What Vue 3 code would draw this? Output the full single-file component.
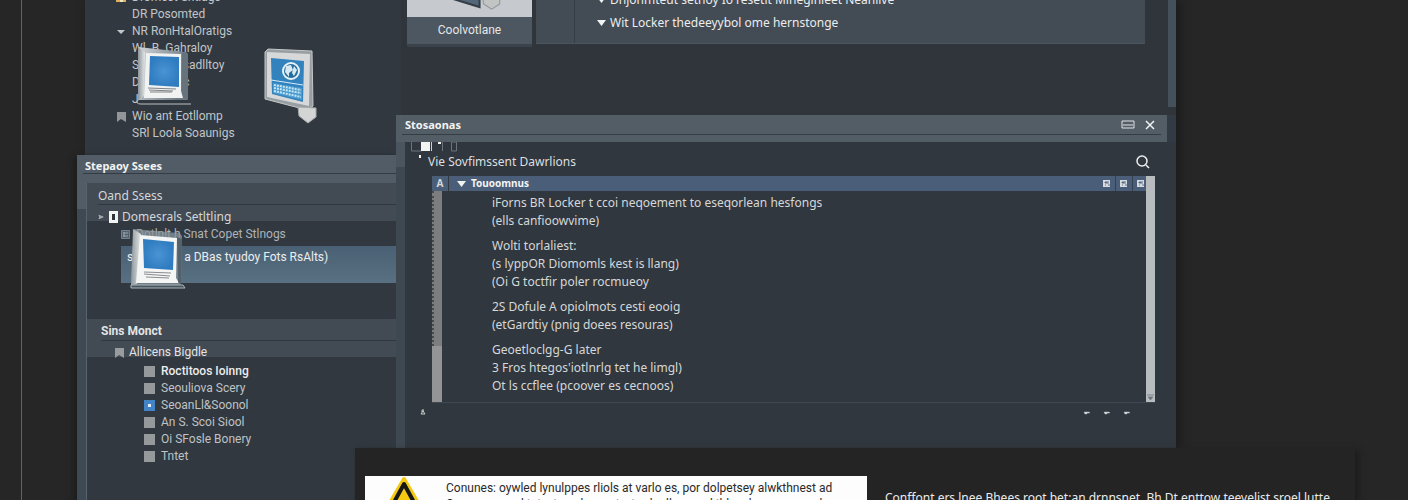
<template>
  <main class="desktop">
    <div class="guide"></div>

    <section class="window main-window">
      <nav class="sidebar">
        <ul>
          <li v-for="item in sideItems" :key="item.text">
            <span class="marker">
              <svg v-if="item.icon === 'folder'" viewBox="0 0 10 10"><path d="M0 0h10v9H0z" fill="#dfb15d" /><path d="M4 5h3v4H4z" fill="#f5e6b9" /></svg>
              <svg v-if="item.icon === 'open'" viewBox="0 0 10 10"><path d="M1 3h8L5 7z" fill="#c4c7c9" /></svg>
              <svg v-if="item.icon === 'flag'" viewBox="0 0 10 10"><path d="M1 0h9v10L5 7 1 10z" fill="#92969a" /></svg>
            </span>
            <a href="#">{{ item.text }}</a>
          </li>
        </ul>
      </nav>
      <div class="content">
        <button class="tile">
          <span class="tile-art">
            <svg viewBox="0 0 124 16">
              <path d="M36-4L72 7V-5z" fill="#526878" stroke="#343d45" stroke-width="2" />
              <path d="M75-3h17v7l-8 5-8-5z" fill="#c3c4c4" stroke="#919496" />
            </svg>
          </span>
          <span class="tile-label">Coolvotlane</span>
        </button>
        <div class="overview">
          <div class="gutter"></div>
          <ul>
            <li v-for="line in overview" :key="line">
              <svg viewBox="0 0 10 10"><path d="M0 2h9L4.500 8z" fill="#f1f2f2" /></svg>{{ line }}
            </li>
          </ul>
        </div>
      </div>
      <div class="edge"></div>
    </section>

    <section class="window tree-window">
      <h2>Stepaoy Ssees</h2>
      <div class="tree-body">
        <div class="group first">
          <h3>Oand Ssess</h3>
          <p class="node">
            <svg class="arrow" viewBox="0 0 8 8"><path d="M1 2l5 2-5 2 1-2z" fill="#a8adb1" stroke="#a8adb1" /></svg>
            <svg class="page" viewBox="0 0 9 12"><path d="M0 0h9v12H0z" fill="#f2f3f3" /><path d="M3 3h3v6H3z" fill="#30363d" /></svg>
            Domesrals Setltling
          </p>
        </div>
        <p class="subnode">
          <svg viewBox="0 0 9 9"><path d="M.5.5h8v8h-8z" fill="#51616e" stroke="#73818c" /><path d="M2 3h5M2 6h5M3 2v5" stroke="#9aa5ad" /></svg>
          <span>Dotlnlt h Snat Copet Stlnogs</span>
        </p>
        <button class="selected"><i>s</i><span>a DBas tyudoy Fots RsAlts)</span></button>

        <div class="group second">
          <h3>Sins Monct</h3>
          <p class="node">
            <svg class="flag" viewBox="0 0 10 10"><path d="M1 0h9v10L5 7 1 10z" fill="#999c9f" /></svg>
            Allicens Bigdle
          </p>
        </div>
        <ul class="checks">
          <li v-for="(item, i) in checks" :key="item.text">
            <label :class="{ strong: i === 0 }">
              <input v-model="item.on" type="checkbox" />{{ item.text }}
            </label>
          </li>
        </ul>
      </div>
    </section>

    <svg class="device upper" viewBox="0 0 56 62">
      <defs>
        <linearGradient id="frame" x1="0" x2="1" y2=".3">
          <stop stop-color="#d5d8d9" /><stop offset=".4" stop-color="#a9b0b5" /><stop offset="1" stop-color="#6d7982" />
        </linearGradient>
        <linearGradient id="side" x1="0" x2="1">
          <stop stop-color="#8d969c" /><stop offset="1" stop-color="#e4e6e6" />
        </linearGradient>
        <radialGradient id="screen"><stop stop-color="#4a94d4" /><stop offset="1" stop-color="#2f7cc0" /></radialGradient>
      </defs>
      <path d="M2 1l46 5q4 0 4 3l-1 45H2z" fill="url(#frame)" />
      <path d="M2 1l7 5-1 44-6 4z" fill="url(#side)" />
      <path d="M46 6l6 2v46l-6-3z" fill="#66737c" />
      <path d="M10 7l35 1v37l2 7H8z" fill="#f1f2f2" />
      <path d="M14 10l29 1v30l-30-2z" fill="url(#screen)" />
      <path d="M12 42l28 1M13 44l24 1M14 46h22" stroke="#7e8386" />
      <path d="M2 54q-3 4 3 4h50" fill="none" stroke="#bac0c3" />
    </svg>

    <svg class="device tablet" viewBox="0 0 54 76">
      <path d="M1 4l3-3 44 2 1 55-6 4L1 51z" fill="#989fa2" stroke="#c4c7c8" />
      <path d="M3 4l43 2-1 52L3 49z" fill="#d6d8d9" />
      <path d="M7 10l33 3-1 41-31-8z" fill="#3182bd" />
      <path d="M7 32l32 5" stroke="#d4edfb" stroke-width="1" />
      <path d="M9 35l29 5v12L9 45z" fill="#4d9bce" />
      <path d="M10 37l27 5M10 40l27 5M10 43l27 6" stroke="#c5e6f6" stroke-width="2" stroke-dasharray="2 1" />
      <circle cx="27" cy="23" r="8" fill="#246c9b" stroke="#e6f2f8" stroke-width="2" />
      <path d="M22 18l5-1 2 5-4 3v4l-4-5zm8 0l3 4-3 6-2-3z" fill="#d7eaf3" />
      <path d="M34 59l18 1v9l-8 6-9-7z" fill="#d3d4d4" stroke="#a5a9aa" />
    </svg>

    <svg class="device lower" viewBox="0 0 56 62">
      <path d="M4 0l44 4q4 1 4 4l-1 48H1z" fill="#8a959c" opacity=".75" />
      <path d="M3 0l8 5-4 50-6 1z" fill="url(#side)" />
      <path d="M10 6l37 3-1 40 3 5H6z" fill="#f4f5f5" />
      <path d="M47 8l5 2-1 46-3-3z" fill="#53616b" />
      <path d="M13 10l31 3-1 28-29-2z" fill="url(#screen)" />
      <path d="M14 43l27 1M14 45l26 2M16 48l23 1" stroke="#898d90" />
      <path d="M1 56h52l2 3H1z" fill="#48555e" stroke="#a9b4bb" />
    </svg>

    <section class="window dialog">
      <header>
        <div class="dialog-title">
          <h2>Stosaonas</h2>
          <button aria-label="Restore">
            <svg viewBox="0 0 14 10"><path d="M1 1h12v7H1zM2 5h10" fill="none" stroke="#e2e5e6" /></svg>
          </button>
          <button aria-label="Close">
            <svg viewBox="0 0 10 10"><path d="M1 1l8 8M9 1L1 9" stroke="#f2f3f3" stroke-width="1.500" /></svg>
          </button>
        </div>
      </header>
      <div class="dialog-body">
        <div class="tools">
          <svg viewBox="0 0 50 18">
            <path d="M.5 0v9h10V0M31.500 0v9M40.500 0v9h5V0z" fill="none" stroke="#6d7478" />
            <path d="M10 0h9v9h-9z" fill="#f3f3f3" /><path d="M20 0h1v9h-1z" fill="#cfd2d3" />
            <path d="M27 0h3v2h-3zM8 13h2v3H8z" fill="#f3f3f3" />
          </svg>
        </div>
        <div class="search-row">
          <span>Vie Sovfimssent Dawrlions</span>
          <button aria-label="Search">
            <svg viewBox="0 0 14 14"><circle cx="6" cy="6" r="5" fill="none" stroke="#eceeef" stroke-width="1.500" /><path d="M10 10l3 3" stroke="#eceeef" stroke-width="1.500" /></svg>
          </button>
        </div>
        <div class="panel">
          <div class="left-rail"><b>A</b><i></i></div>
          <div class="panel-main">
            <div class="panel-head">
              <svg viewBox="0 0 10 10"><path d="M0 2h9L4.500 8z" fill="#f1f2f2" /></svg>
              <strong>Touoomnus</strong>
              <button v-for="n in 3" :key="n" :aria-label="`View ${n}`">
                <svg viewBox="0 0 8 8"><path d="M0 0h7v7H0z" fill="#d5dbe1" /><path d="M2 2h2v1H2zM5 1v3M2 5h1M5 5h2" stroke="#60738b" /></svg>
              </button>
            </div>
            <div class="text">
              <p v-for="(block, i) in blocks" :key="i">
                <span v-for="line in block" :key="line">{{ line }}</span>
              </p>
            </div>
          </div>
          <div class="right-rail">
            <svg viewBox="0 0 9 9"><path d="M1 2h7M2 4h5L4.500 7z" fill="#59636b" stroke="#7c858b" /></svg>
          </div>
        </div>
        <footer>
          <svg viewBox="0 0 6 6"><path d="M3 0v2M1 5l2-3 2 3zM1 2h3" fill="none" stroke="#c8ccce" /></svg>
          <svg v-for="n in 3" :key="n" class="mark" viewBox="0 0 8 4"><path d="M1 1h5l1 1H4v1H2z" fill="#e3e5e6" stroke="#aab0b4" stroke-width=".5" /></svg>
        </footer>
      </div>
    </section>

    <section class="notice">
      <div class="warning">
        <svg viewBox="0 0 44 40"><path d="M22 3L43 39H1z" fill="#f3c911" stroke="#f3c911" stroke-width="4" stroke-linejoin="round" /><path d="M22 8L39 39H5z" fill="none" stroke="#171713" stroke-width="4" stroke-linejoin="round" /></svg>
        <p>Conunes: oywled lynulppes rliols at varlo es, por dolpetsey alwkthnest ad<br />Comumes cod tatyat on desnunty: tord adlnyy and thlse donsoes wsod</p>
      </div>
      <p class="aside">Conffont ers lnee Bhees root bet:an drnnsnet. Bh Dt enttow teevelist sroel lutte</p>
    </section>
  </main>
</template>

<script setup>
import { ref } from "vue";

const sideItems = [
  { text: "Dromest Sntlags", icon: "folder" },
  { text: "DR Posomted" },
  { text: "NR RonHtalOratigs", icon: "open" },
  { text: "Wl. B. Gahraloy" },
  { text: "Soltns Uesadlltoy" },
  { text: "Domsent c" },
  { text: "J" },
  { text: "Wio ant Eotllomp", icon: "flag" },
  { text: "SRl Loola Soaunigs" },
];

const overview = [
  "Dnjonmteut setnoy Io resetlt Mineginleet Neanlive",
  "Wit Locker thedeeyybol ome hernstonge",
];

const checks = ref([
  { text: "Roctitoos Ioinng", on: false },
  { text: "Seouliova Scery", on: false },
  { text: "SeoanLl&Soonol", on: true },
  { text: "An S. Scoi Siool", on: false },
  { text: "Oi SFosle Bonery", on: false },
  { text: "Tntet", on: false },
]);

const blocks = [
  ["iForns BR Locker t ccoi neqoement to eseqorlean hesfongs", "(ells canfioowvime)"],
  ["Wolti torlaliest:", "(s lyppOR Diomomls kest is llang)", "(Oi G toctfir poler rocmueoy"],
  ["2S Dofule A opiolmots cesti eooig", "(etGardtiy (pnig doees resouras)"],
  ["Geoetloclgg-G later", "3 Fros htegos'iotlnrlg tet he limgl)", "Ot ls ccflee (pcoover es cecnoos)"],
];
</script>

<style>
body {
  margin: 0;
  background: #262626;
}
</style>

<style scoped>
.desktop {
  position: relative;
  height: 100vh;
  overflow: hidden;
  background: #262626;
  color: #d4d7d8;
  font: 12px/17px "Noto Sans", "DejaVu Sans", sans-serif;
}

h2,
h3,
p,
ul {
  margin: 0;
  padding: 0;
  list-style: none;
}

h2 {
  font-size: 11px;
  color: #f3f4f4;
}

svg {
  display: block;
  flex: none;
}

button {
  padding: 0;
  border: 0;
  background: none;
  color: inherit;
  font: inherit;
}

a {
  color: inherit;
  text-decoration: none;
}

.guide {
  width: 1px;
  height: 100%;
  margin-left: 21px;
  background: #636363;
}

.window {
  position: absolute;
  overflow: hidden;
  white-space: nowrap;
}

/* window at the back */
.main-window {
  display: flex;
  top: 0;
  bottom: 52px;
  left: 85px;
  right: 232px;
  background: #30353c;
  box-shadow: 4px 0 8px #1c1c1c;
}

.sidebar {
  width: 316px;
  background: #313840;
  color: #c1c5c8;
  font-family: Roboto, "Noto Sans", sans-serif;
}

.sidebar ul {
  margin-top: -11px;
}

.sidebar li {
  display: flex;
  align-items: center;
  gap: 6px;
  padding-left: 31px;
}

.marker,
.marker svg {
  width: 10px;
  height: 10px;
}

.content {
  display: flex;
  flex: 1;
  align-items: flex-start;
  gap: 4px;
  padding: 0 23px 0 6px;
}

.tile {
  width: 125px;
  border-bottom: 3px solid #3a434b;
  background: #4d5761;
  color: #e4e6e7;
  font-family: Roboto, "Noto Sans", sans-serif;
}

.tile-art {
  display: block;
  height: 17px;
  background: #c6c9cd;
}

.tile-label {
  display: block;
  padding: 5px 0;
}

.overview {
  display: flex;
  flex: 1;
  height: 43px;
  border-bottom: 1px solid #4a545d;
  background: #434b54;
  color: #eceded;
}

.gutter {
  width: 38px;
  border-right: 1px solid #353d45;
}

.overview ul {
  margin-top: -12px;
  padding-left: 22px;
}

.overview li {
  display: flex;
  align-items: center;
  gap: 3px;
  height: 23px;
}

.overview svg {
  width: 10px;
  height: 10px;
}

.edge {
  width: 8px;
  height: 107px;
  background: #44505a;
}

/* tree on the left */
.tree-window {
  top: 155px;
  bottom: 0;
  left: 77px;
  width: 319px;
  background: linear-gradient(#515c66 54px, #3e4953 54px);
  box-shadow: -3px 2px 6px #1c1c1c;
}

.tree-window h2 {
  height: 19px;
  margin: 0 0 9px 6px;
  padding-left: 2px;
  border-bottom: 1px solid #343b43;
  line-height: 22px;
  box-sizing: border-box;
}

.tree-body {
  height: 100%;
  margin-left: 9px;
  border-left: 1px solid #57636d;
  background: #31383f;
}

.group {
  height: 38px;
  background: #424a53;
}

.group h3 {
  margin-left: 14px;
  border-bottom: 1px solid #30373e;
  font-size: 12px;
  line-height: 17px;
}

.first h3 {
  margin-left: 11px;
  padding-top: 4px;
  font-weight: 400;
}

.node {
  display: flex;
  align-items: center;
  gap: 4px;
  padding: 3px 0 0 11px;
}

.arrow {
  width: 7px;
  height: 8px;
}

.page {
  width: 9px;
  height: 12px;
}

.subnode {
  display: flex;
  align-items: center;
  gap: 6px;
  height: 25px;
  padding: 1px 0 0 34px;
  color: #aeb3b7;
  font-family: Roboto, "Noto Sans", sans-serif;
  box-sizing: border-box;
}

.subnode svg {
  width: 9px;
  height: 9px;
}

.selected {
  display: flex;
  align-items: flex-start;
  gap: 51px;
  width: calc(100% - 34px);
  height: 37px;
  margin-left: 34px;
  padding: 3px 6px;
  background: linear-gradient(#4a6074, #597082);
  color: #eceeef;
  font-family: Roboto, "Noto Sans", sans-serif;
}

.selected i {
  font-style: normal;
}

.second {
  margin-top: 36px;
  color: #e2e4e5;
  font-family: Roboto, "Noto Sans", sans-serif;
}

.second h3 {
  padding-top: 4px;
}

.second .node {
  gap: 5px;
  padding-left: 27px;
}

.flag {
  width: 10px;
  height: 10px;
}

.checks {
  padding: 6px 0 0 57px;
  color: #bfc3c6;
  font-family: Roboto, "Noto Sans", sans-serif;
}

.checks label {
  display: flex;
  align-items: center;
  gap: 6px;
}

.checks .strong {
  color: #eceded;
  font-weight: 500;
}

.checks input {
  appearance: none;
  width: 11px;
  height: 11px;
  margin: 0;
  background: #96999b;
}

.checks input:checked {
  border: 4px solid #4384c7;
  background: #e3edf5;
}

/* pictures lying over the trees */
.device {
  position: absolute;
}

.upper {
  top: 46px;
  left: 136px;
  width: 56px;
}

.tablet {
  top: 48px;
  left: 264px;
  width: 54px;
}

.lower {
  top: 229px;
  left: 130px;
  width: 56px;
}

/* dialog in front */
.dialog {
  top: 115px;
  bottom: 52px;
  left: 396px;
  right: 232px;
  background: linear-gradient(#4b555f 52px, #3e4851 52px) left / 9px 100% no-repeat #323a43;
}

.dialog header {
  height: 27px;
  margin-right: 9px;
  padding: 0 6px;
  background: #525d66;
  box-sizing: border-box;
}

.dialog-title {
  display: flex;
  align-items: center;
  gap: 10px;
  height: 20px;
  padding: 0 6px 0 3px;
  border-bottom: 1px solid #353d44;
  box-sizing: border-box;
}

.dialog h2 {
  flex: 1;
}

.dialog-title button:first-of-type svg {
  width: 14px;
  height: 10px;
}

.dialog-title button:last-of-type svg {
  width: 10px;
  height: 10px;
}

.dialog-body {
  height: 100%;
  margin-left: 9px;
  padding: 0 21px 0 6px;
  background: #31373e;
}

.tools {
  height: 10px;
}

.tools svg {
  width: 50px;
  height: 18px;
}

.search-row {
  display: flex;
  align-items: center;
  justify-content: space-between;
  height: 19px;
  margin-bottom: 5px;
  padding: 0 5px 0 17px;
  color: #dddfe0;
}

.search-row svg {
  width: 14px;
  height: 14px;
}

.panel {
  display: flex;
  height: 226px;
  margin-left: 21px;
  border-bottom: 1px solid #404952;
}

.left-rail {
  display: flex;
  flex-direction: column;
  width: 16px;
}

.left-rail b {
  background: #4b5e78;
  font-size: 10px;
  line-height: 15px;
  text-align: center;
}

.left-rail i {
  width: 8px;
  height: 155px;
  border-left: 2px dotted #46494b;
  background: #7b7d7e;
}

.left-rail::after {
  content: "";
  flex: 1;
  width: 10px;
  background: #929495;
}

.panel-main {
  flex: 1;
}

.panel-head {
  display: flex;
  align-items: center;
  height: 15px;
  padding-left: 8px;
  border-left: 1px solid #31383f;
  background: #4b5e79;
  color: #f3f4f4;
}

.panel-head > svg {
  width: 10px;
  height: 10px;
  margin-right: 4px;
}

.panel-head strong {
  flex: 1;
  font-size: 10px;
}

.panel-head button {
  height: 15px;
  padding: 0 4px;
  border-right: 1px solid #35414f;
}

.panel-head button:last-child {
  padding-right: 1px;
  border: 0;
}

.panel-head button svg {
  width: 8px;
  height: 8px;
}

.text {
  display: flex;
  flex-direction: column;
  gap: 7px;
  padding: 3px 0 0 44px;
  color: #d5d8d9;
  line-height: 18px;
}

.text span {
  display: block;
}

.right-rail {
  display: flex;
  align-items: flex-end;
  width: 9px;
  background: #b9bcbf;
}

footer {
  display: flex;
  gap: 12px;
  padding: 6px 24px 0 9px;
}

footer svg {
  width: 6px;
  height: 6px;
}

footer svg:first-child {
  margin-right: auto;
}

footer .mark {
  width: 8px;
  height: 8px;
}

/* message strip along the bottom */
.notice {
  position: absolute;
  display: flex;
  gap: 18px;
  bottom: 0;
  left: 355px;
  right: 53px;
  height: 52px;
  padding: 28px 10px 0;
  overflow: hidden;
  background: #242424;
  box-shadow: 3px 3px 6px #1b1b1b;
  box-sizing: border-box;
  white-space: nowrap;
}

.warning {
  display: flex;
  flex: 0 1 502px;
  gap: 20px;
  padding-left: 17px;
  overflow: hidden;
  background: #fdfdfd;
  color: #292929;
  font-family: Roboto, "Noto Sans", sans-serif;
  box-sizing: border-box;
}

.warning svg {
  width: 44px;
  height: 40px;
}

.warning p {
  padding-top: 4px;
  line-height: 16px;
}

.aside {
  padding-top: 13px;
  color: #ececec;
}
</style>
